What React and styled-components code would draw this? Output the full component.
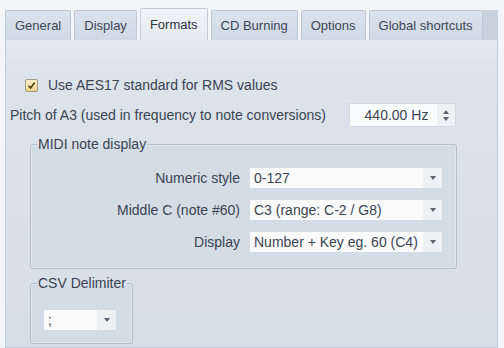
import React from "react";
import styled, { createGlobalStyle } from "styled-components";

const Global = createGlobalStyle`
  html, body {
    margin: 0;
    padding: 0;
    background: #f3f5f8;
  }
  body {
    font-family: "Liberation Sans", Arial, sans-serif;
    font-size: 14px;
    color: #3a4452;
  }
`;

const Window = styled.div`
  width: 504px;
  height: 348px;
  overflow: hidden;
  padding: 8px 6px 0 5px;
  box-sizing: border-box;
  display: flex;
  flex-direction: column;
`;

const TabBar = styled.div`
  display: flex;
  align-items: flex-end;
  height: 32px;
  gap: 3px;
  font-size: 13px;
`;

const Tab = styled.div`
  height: ${(p) => (p.$active ? "32px" : "30px")};
  box-sizing: border-box;
  padding: 0 9px;
  display: flex;
  align-items: center;
  white-space: nowrap;
  border: 1px solid ${(p) => (p.$active ? "#c3ccd6" : "#bcc7d3")};
  border-bottom: none;
  border-radius: 2px 2px 0 0;
  background: ${(p) =>
    p.$active
      ? "linear-gradient(#f1f4f7, #e6ebf1)"
      : "linear-gradient(#dae3ed, #cfd9e5)"};
  color: ${(p) => (p.$active ? "#2d3540" : "#3d4754")};
`;

const TabFill = styled.div`
  flex: 1;
  height: 30px;
  background: #c8d2dd;
  margin-left: -3px;
`;

const Panel = styled.div`
  flex: 1;
  border: 1px solid #c2ccd7;
  border-top: none;
  background: linear-gradient(#e3e9ef 0px, #dce3eb 30px, #d6dee7 100%);
  padding: 37px 0 0 4px;
  display: flex;
  flex-direction: column;
  align-items: flex-start;
`;

const CheckRow = styled.label`
  display: flex;
  align-items: center;
  height: 16px;
  margin-left: 15px;
  gap: 10px;
`;

const Box = styled.span`
  width: 13px;
  height: 13px;
  box-sizing: border-box;
  border: 1px solid #a39a80;
  border-radius: 2px;
  background: linear-gradient(#fbefc8, #f1d68c);
  display: flex;
  align-items: center;
  justify-content: center;
`;

const PitchRow = styled.div`
  width: 446px;
  margin-top: 10px;
  display: flex;
  align-items: center;
  justify-content: space-between;
`;

const SpinInput = styled.div`
  width: 107px;
  height: 24px;
  box-sizing: border-box;
  display: flex;
  align-items: center;
  background: #fbfcfd;
  border: 1px solid #d2d9e1;
`;

const SpinText = styled.span`
  flex: 1;
  text-align: center;
  padding-left: 6px;
`;

const SpinButtons = styled.div`
  width: 18px;
  height: 100%;
  display: flex;
  flex-direction: column;
  align-items: center;
  justify-content: center;
  gap: 3px;
  background: #eef1f4;
`;

const Group = styled.fieldset`
  margin: ${(p) => p.$mt}px 0 0 20px;
  width: ${(p) => p.$w}px;
  box-sizing: border-box;
  border: 1px solid #b3bfcc;
  border-radius: 3px;
  background: #d4dce6;
  box-shadow: inset 0 0 0 1px #dfe5ec;
  padding: ${(p) => p.$pad};
  min-width: 0;
`;

const Legend = styled.legend`
  padding: 0 1px;
  margin-left: ${(p) => p.$ml}px;
  line-height: 16px;
  white-space: nowrap;
  color: #3a4452;
`;

const FieldGrid = styled.div`
  display: grid;
  grid-template-columns: 1fr 194px;
  column-gap: 9px;
  row-gap: 10px;
  align-items: center;
`;

const Label = styled.span`
  text-align: right;
  white-space: nowrap;
`;

const Select = styled.div`
  height: 22px;
  width: ${(p) => (p.$w ? `${p.$w}px` : "auto")};
  box-sizing: border-box;
  display: flex;
  align-items: center;
  background: #fbfbfc;
  border: 1px solid #d3dae2;
`;

const SelectText = styled.span`
  flex: 1;
  padding-left: 4px;
  white-space: nowrap;
  overflow: hidden;
`;

const Arrow = styled.span`
  width: 19px;
  height: 100%;
  display: flex;
  align-items: center;
  justify-content: center;
  background: #eef0f3;
`;

const Tri = ({ up }) => (
  <svg width="6" height="4" viewBox="0 0 6 4">
    <path d={up ? "M0 4 L3 0 L6 4 Z" : "M0 0 L6 0 L3 4 Z"} fill="#5a6472" />
  </svg>
);

const Dropdown = ({ value, w }) => (
  <Select $w={w}>
    <SelectText>{value}</SelectText>
    <Arrow>
      <Tri />
    </Arrow>
  </Select>
);

const tabs = ["General", "Display", "Formats", "CD Burning", "Options", "Global shortcuts"];

export default function App() {
  return (
    <>
      <Global />
      <Window>
        <TabBar>
          {tabs.map((t) => (
            <Tab key={t} $active={t === "Formats"}>
              {t}
            </Tab>
          ))}
          <TabFill />
        </TabBar>
        <Panel>
          <CheckRow>
            <Box>
              <svg width="9" height="9" viewBox="0 0 9 9">
                <path d="M1.5 4.8 L3.6 7 L7.6 1.6" fill="none" stroke="#4a3d1a" strokeWidth="1.6" />
              </svg>
            </Box>
            Use AES17 standard for RMS values
          </CheckRow>
          <PitchRow>
            <span>Pitch of A3 (used in frequency to note conversions)</span>
            <SpinInput>
              <SpinText>440.00 Hz</SpinText>
              <SpinButtons>
                <Tri up />
                <Tri />
              </SpinButtons>
            </SpinInput>
          </PitchRow>
          <Group $mt={9} $w={427} $pad="15px 13px 15px 12px">
            <Legend $ml={-6}>MIDI note display</Legend>
            <FieldGrid>
              <Label>Numeric style</Label>
              <Dropdown value="0-127" />
              <Label>Middle C (note #60)</Label>
              <Dropdown value="C3 (range: C-2 / G8)" />
              <Label>Display</Label>
              <Dropdown value="Number + Key eg. 60 (C4)" />
            </FieldGrid>
          </Group>
          <Group $mt={6} $w={103} $pad="18px 15px 12px 12px">
            <Legend $ml={-6}>CSV Delimiter</Legend>
            <Dropdown value=";" w={74} />
          </Group>
        </Panel>
      </Window>
    </>
  );
}
